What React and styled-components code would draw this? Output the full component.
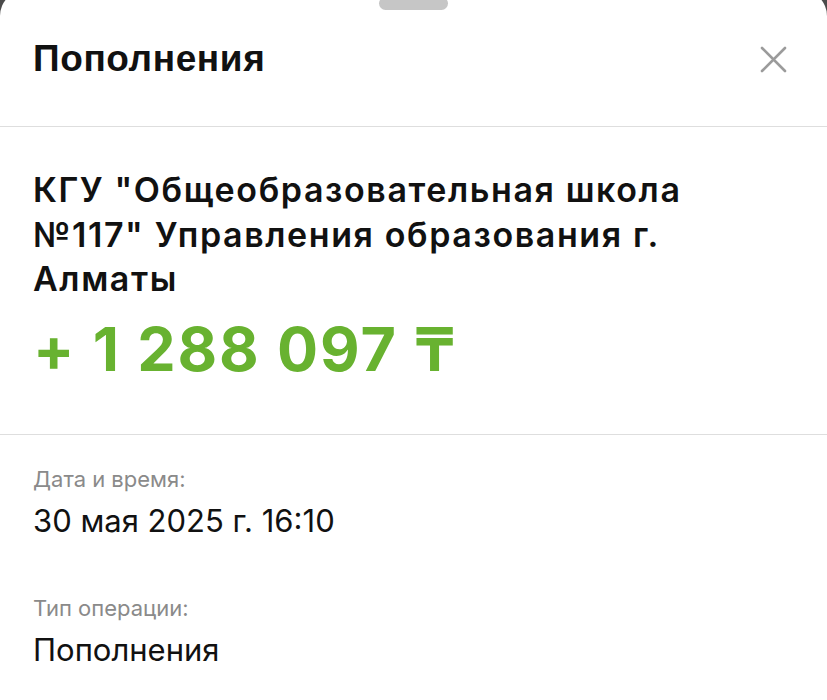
import React from 'react';
import styled, { createGlobalStyle } from 'styled-components';

const GlobalStyle = createGlobalStyle`
  html, body {
    margin: 0;
    background: #4b4b4b;
    overflow: hidden;
  }
  body {
    font-family: Inter, "Liberation Sans", Arial, sans-serif;
    color: #111111;
  }
`;

const Sheet = styled.div`
  background: #ffffff;
  border-radius: 26px 26px 0 0;
  margin-top: -10px;
  min-height: 720px;
  display: flex;
  flex-direction: column;
`;

const Handle = styled.div`
  width: 69px;
  height: 13px;
  margin: 7px auto 0;
  border-radius: 7px;
  background: #c6c6c6;
`;

const Header = styled.div`
  display: flex;
  align-items: center;
  justify-content: space-between;
  padding: 27px 40px 45px 33px;
  border-bottom: 1.5px solid #dedede;
`;

const Title = styled.h1`
  margin: 0;
  font-family: "Liberation Sans", Arial, sans-serif;
  font-size: 37px;
  line-height: 44px;
  font-weight: 700;
  letter-spacing: 0.6px;
`;

const CloseButton = styled.button`
  border: 0;
  padding: 0;
  background: none;
  width: 27px;
  height: 27px;
  display: flex;
`;

const Summary = styled.section`
  padding: 41px 33px 54px;
  border-bottom: 1.5px solid #dedede;
`;

const Payee = styled.div`
  font-size: 34px;
  line-height: 44.5px;
  font-weight: 600;
  letter-spacing: 1.6px;
`;

const Amount = styled.div`
  margin-top: 17px;
  font-size: 61px;
  line-height: 61px;
  font-weight: 700;
  letter-spacing: 1.9px;
  color: #68b230;
`;

const Details = styled.section`
  padding: 30px 33px 0;
`;

const Field = styled.div`
  & + & {
    margin-top: 53px;
  }
`;

const Label = styled.div`
  font-size: 22px;
  line-height: 28px;
  color: #8a8a8a;
`;

const Value = styled.div`
  margin-top: 8px;
  font-size: 31px;
  line-height: 40px;
`;

const CloseIcon = () => (
  <svg width="27" height="27" viewBox="0 0 27 27" fill="none">
    <path d="M2 2 L25 25 M25 2 L2 25" stroke="#9b9b9b" strokeWidth="2.6" strokeLinecap="round" />
  </svg>
);

const fields = [
  { label: 'Дата и время:', value: '30 мая 2025 г. 16:10' },
  { label: 'Тип операции:', value: 'Пополнения' },
];

export default function App() {
  return (
    <>
      <GlobalStyle />
      <Sheet>
        <Handle />
        <Header>
          <Title>Пополнения</Title>
          <CloseButton aria-label="Закрыть">
            <CloseIcon />
          </CloseButton>
        </Header>
        <Summary>
          <Payee>
            КГУ "Общеобразовательная школа
            <br />
            №117" Управления образования г.
            <br />
            Алматы
          </Payee>
          <Amount>+ 1 288 097 ₸</Amount>
        </Summary>
        <Details>
          {fields.map((f) => (
            <Field key={f.label}>
              <Label>{f.label}</Label>
              <Value>{f.value}</Value>
            </Field>
          ))}
        </Details>
      </Sheet>
    </>
  );
}
